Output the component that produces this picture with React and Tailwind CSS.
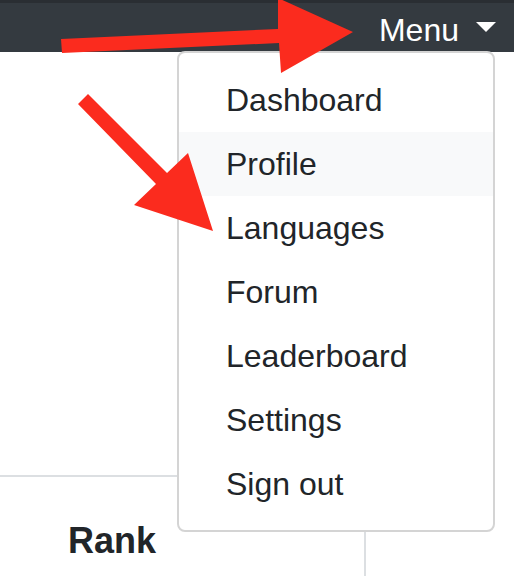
export default function App() {
  const items = ["Dashboard", "Profile", "Languages", "Forum", "Leaderboard", "Settings", "Sign out"];
  return (
    <div className="relative w-[514px] h-[576px] overflow-hidden bg-white" style={{ fontFamily: '"Liberation Sans", Arial, sans-serif' }}>
      <div className="h-[52px] bg-[#343a40] border-t-[3px] border-[#2a2e33] flex justify-end items-start pt-[3px] pr-[18px]">
        <span className="text-[32px] leading-[48px] text-white">Menu</span>
        <span className="ml-[17px] mt-[16px] w-0 h-0 border-l-[10px] border-r-[10px] border-t-[10px] border-l-transparent border-r-transparent border-t-white"></span>
      </div>
      <div className="h-[423px]"></div>
      <div className="w-[366px] border-t-2 border-r-2 border-[#dcdfe2] h-[101px] pl-[68px] pt-[44px]">
        <span className="text-[36px] leading-[40px] font-bold text-[#212529]">Rank</span>
      </div>

      <div className="absolute left-[177px] top-[51px] w-[318px] bg-white border-2 border-[#d4d4d4] rounded-[8px] pt-[15px] pb-[14px]">
        {items.map((t) => (
          <div
            key={t}
            className={
              "px-[47px] py-[8px] text-[32px] leading-[48px] text-[#212529] " +
              (t === "Profile" ? "bg-[#f8f9fa]" : "")
            }
          >
            {t}
          </div>
        ))}
      </div>

      <svg className="absolute left-0 top-0 pointer-events-none" width="514" height="576" viewBox="0 0 514 576">
        <polygon points="61,39 278,29 278,-2 353,32 281,73 279,43 62,53" fill="#fb2b1e" />
        <polygon points="88,94 167,173 188,153 213,231 134,205 156,184 78,104" fill="#fb2b1e" />
      </svg>
    </div>
  );
}
